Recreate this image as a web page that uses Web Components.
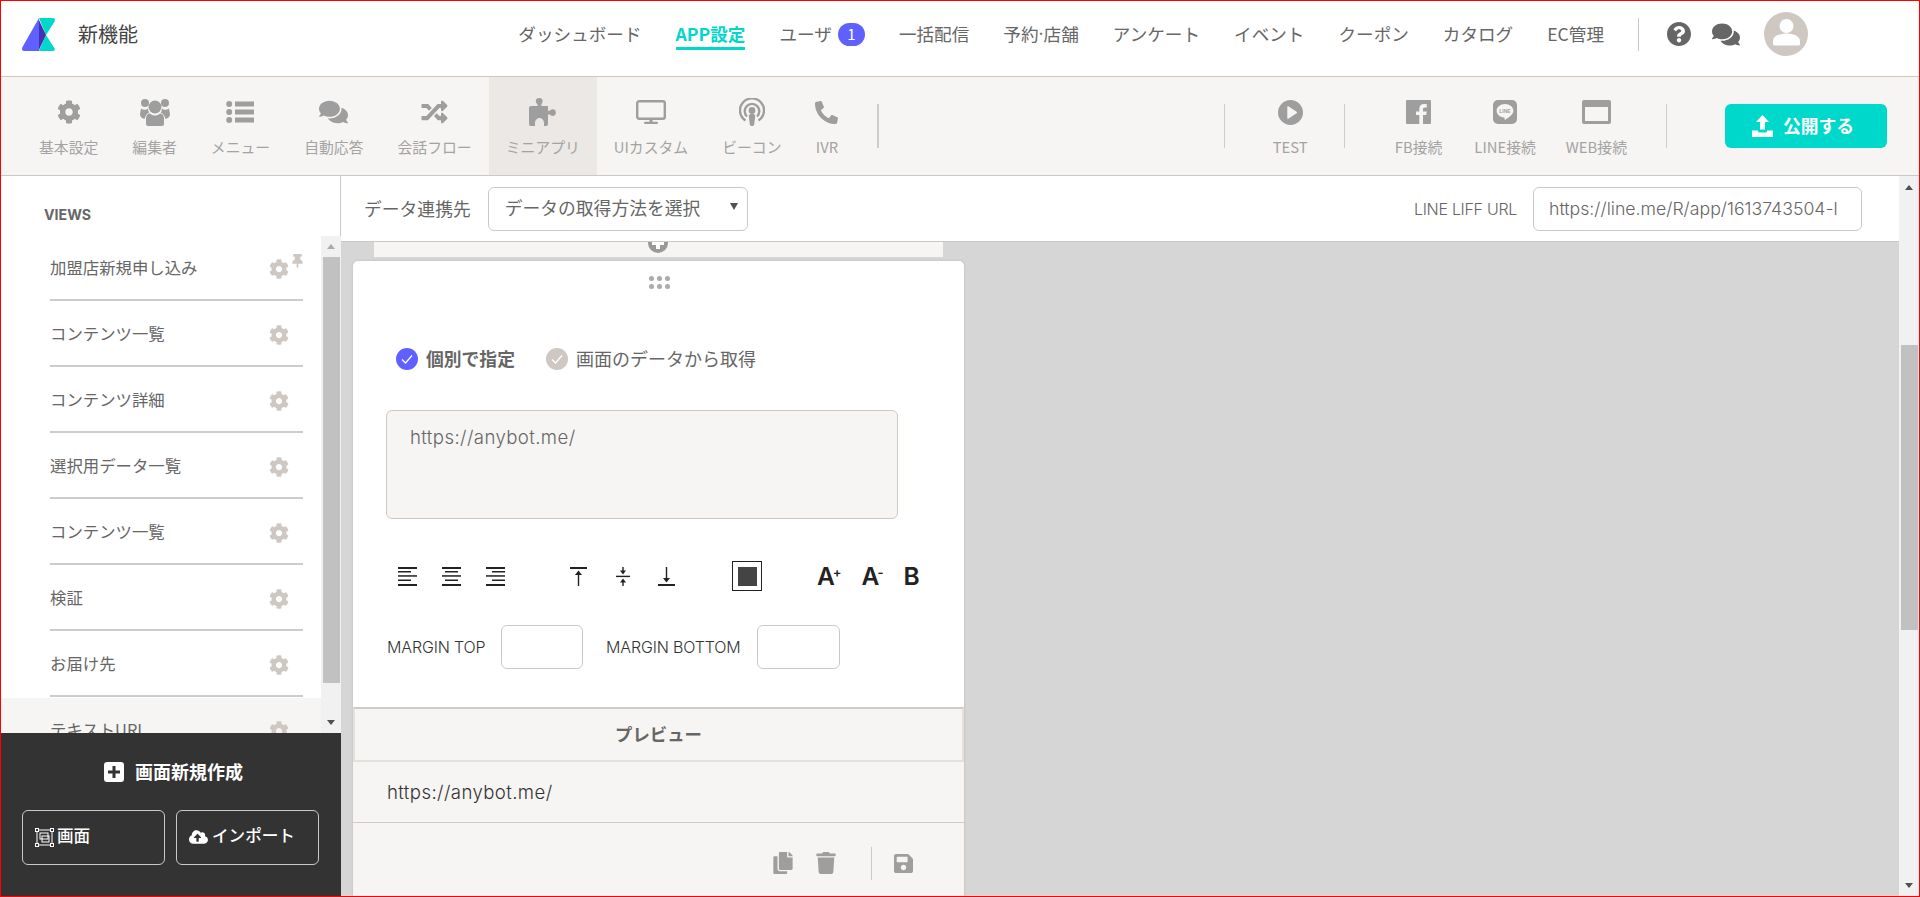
<!DOCTYPE html>
<html lang="ja">
<head>
<meta charset="utf-8">
<title>新機能</title>
<style>
  html, body { margin: 0; height: 897px; overflow: hidden; }
  body { font-family: "Noto Sans CJK JP", "Noto Sans", sans-serif; color: #666; background: #fff; }
</style>
</head>
<body>
<app-shell>
  <top-nav slot="top"></top-nav>
  <tool-bar slot="tools">
    <tool-item slot="left" label="基本設定"><ui-icon name="cog" w="24" h="24"></ui-icon></tool-item>
    <tool-item slot="left" label="編集者"><ui-icon name="users" w="30" h="28"></ui-icon></tool-item>
    <tool-item slot="left" label="メニュー"><ui-icon name="list" w="28" h="24"></ui-icon></tool-item>
    <tool-item slot="left" label="自動応答"><ui-icon name="comments" w="29" h="26"></ui-icon></tool-item>
    <tool-item slot="left" label="会話フロー"><ui-icon name="random" w="29" h="26"></ui-icon></tool-item>
    <tool-item slot="left" label="ミニアプリ" active><ui-icon name="puzzle" w="27" h="28"></ui-icon></tool-item>
    <tool-item slot="left" label="UIカスタム"><ui-icon name="monitor" w="30" h="24"></ui-icon></tool-item>
    <tool-item slot="left" label="ビーコン"><ui-icon name="podcast" w="26" h="28"></ui-icon></tool-item>
    <tool-item slot="left" label="IVR"><ui-icon name="phone" w="23" h="23"></ui-icon></tool-item>
    <tool-item slot="right" label="TEST"><ui-icon name="play" w="25" h="25"></ui-icon></tool-item>
    <tool-item slot="right2" label="FB接続"><ui-icon name="fb" w="25" h="24"></ui-icon></tool-item>
    <tool-item slot="right2" label="LINE接続" style="padding-left:15px"><ui-icon name="line" w="24" h="24"></ui-icon></tool-item>
    <tool-item slot="right2" label="WEB接続" style="padding-left:13px"><ui-icon name="web" w="29" h="24"></ui-icon></tool-item>
  </tool-bar>
  <view-sidebar slot="side">
    <view-row label="加盟店新規申し込み" pinned></view-row>
    <view-row label="コンテンツ一覧"></view-row>
    <view-row label="コンテンツ詳細"></view-row>
    <view-row label="選択用データ一覧"></view-row>
    <view-row label="コンテンツ一覧"></view-row>
    <view-row label="検証"></view-row>
    <view-row label="お届け先"></view-row>
    <view-row label="テキストURL" current></view-row>
  </view-sidebar>
  <data-header slot="head"></data-header>
  <block-canvas slot="canvas">
    <block-card></block-card>
  </block-canvas>
  <scroll-bar slot="scroll" btn="22" offset="147" size="285" up="#505050"></scroll-bar>
</app-shell>

<script>
const ICONS = {
  cog: '<svg viewBox="0 0 512 512"><path d="M487.4 315.7l-42.6-24.6c4.3-23.2 4.3-47 0-70.2l42.6-24.6c4.9-2.8 7.1-8.6 5.5-14-11.1-35.6-30-67.8-54.7-94.6-3.8-4.1-10-5.1-14.8-2.3L380.8 110c-17.9-15.4-38.5-27.3-60.8-35.1V25.8c0-5.6-3.9-10.5-9.4-11.7-36.7-8.2-74.3-7.8-109.2 0-5.5 1.2-9.4 6.1-9.4 11.7V75c-22.2 7.9-42.8 19.8-60.8 35.1L88.7 85.5c-4.9-2.8-11-1.9-14.8 2.3-24.7 26.7-43.6 58.9-54.7 94.6-1.7 5.4.6 11.2 5.5 14L67.3 221c-4.3 23.2-4.3 47 0 70.2l-42.6 24.6c-4.9 2.8-7.1 8.6-5.5 14 11.1 35.6 30 67.8 54.7 94.6 3.8 4.1 10 5.1 14.8 2.3l42.6-24.6c17.9 15.4 38.5 27.3 60.8 35.1v49.2c0 5.6 3.9 10.5 9.4 11.7 36.7 8.2 74.3 7.8 109.2 0 5.5-1.2 9.4-6.1 9.4-11.7v-49.2c22.2-7.9 42.8-19.8 60.8-35.1l42.6 24.6c4.9 2.8 11 1.9 14.8-2.3 24.7-26.7 43.6-58.9 54.7-94.6 1.5-5.5-.7-11.3-5.6-14.1zM256 336c-44.1 0-80-35.9-80-80s35.9-80 80-80 80 35.9 80 80-35.9 80-80 80z"/></svg>',
  users: '<svg viewBox="0 0 30 28"><circle cx="15" cy="9" r="6.5"/><circle cx="5" cy="5" r="4"/><circle cx="25" cy="5" r="4"/><path d="M6 26V20c0-3 2-4.500 4-4.500 1.500 1.500 3 2 5 2s3.500-.5 5-2c2 0 4 1.500 4 4.500v6q0 2-2 2H8q-2 0-2-2z"/><path d="M1 10.500q4 2.500 7 0 0 2.500 1.300 4Q5.500 16 4.600 21 0 20 0 16zM29 10.500q-4 2.500-7 0 0 2.500-1.300 4 3.800 1.500 4.700 6.500 4.600-1 4.600-5z"/></svg>',
  list: '<svg viewBox="0 0 28 24"><circle cx="3.200" cy="4" r="3"/><circle cx="3.200" cy="12" r="3"/><circle cx="3.200" cy="20" r="3"/><rect x="9" y="1.500" width="19" height="5"/><rect x="9" y="9.500" width="19" height="5"/><rect x="9" y="17.500" width="19" height="5"/></svg>',
  comments: '<svg viewBox="0 0 576 512"><path d="M416 192c0-88.400-93.100-160-208-160S0 103.600 0 192c0 34.300 14.100 65.900 38 92-13.400 30.200-35.500 54.200-35.800 54.500-2.200 2.300-2.800 5.700-1.500 8.700S4.800 352 8 352c36.600 0 66.900-12.300 88.700-25 32.200 15.700 70.300 25 111.300 25 114.900 0 208-71.600 208-160zm122 220c23.900-26 38-57.700 38-92 0-66.900-53.500-124.200-129.300-148.100.9 6.600 1.300 13.300 1.300 20.100 0 105.900-107.700 192-240 192-10.800 0-21.300-.8-31.700-1.900C207.800 439.600 281.800 480 368 480c41 0 79.100-9.200 111.300-25 21.800 12.700 52.100 25 88.700 25 3.200 0 6.100-1.900 7.300-4.800 1.300-2.900.7-6.300-1.500-8.700-.3-.3-22.400-24.200-35.800-54.500z"/></svg>',
  random: '<svg viewBox="0 0 512 512"><path d="M504.971 359.029c9.373 9.373 9.373 24.569 0 33.941l-80 79.984c-15.010 15.010-40.971 4.490-40.971-16.971V416h-58.785a12.004 12.004 0 0 1-8.773-3.812l-70.556-75.596 53.333-57.143L352 336h32v-39.981c0-21.438 25.943-31.998 40.971-16.971l80 79.981zM12 176h84l52.781 56.551 53.333-57.143-70.556-75.596A11.999 11.999 0 0 0 122.785 96H12c-6.627 0-12 5.373-12 12v56c0 6.627 5.373 12 12 12zm372 0v39.984c0 21.460 25.961 31.980 40.971 16.971l80-79.984c9.373-9.373 9.373-24.569 0-33.941l-80-79.981C409.943 24.021 384 34.582 384 56.019V96h-58.785a12.004 12.004 0 0 0-8.773 3.812L96 336H12c-6.627 0-12 5.373-12 12v56c0 6.627 5.373 12 12 12h110.785c3.326 0 6.503-1.381 8.773-3.812L352 176h32z"/></svg>',
  puzzle: '<svg viewBox="0 0 27 28"><path d="M2 8h6c1 0 1-1 .2-2C7 5 6.800 4 6.800 3.200a3.400 3.200 0 0 1 6.800 0c0 .8-.3 1.800-1 2.800-.8 1-.6 2 .4 2h6v4c0 1 1 1.200 2 .4 1-.8 1.800-1.200 2.600-1.200a3.200 3.400 0 0 1 0 6.800c-.8 0-1.600-.4-2.600-1.200-1-.8-2-.6-2 .4V26q0 2-2 2h-2v-3a4.500 5 0 0 0-9 0v3H2q-2 0-2-2V10q0-2 2-2z"/></svg>',
  monitor: '<svg viewBox="0 0 30 24"><rect x="1.200" y="1.200" width="27.600" height="17.600" rx="2" fill="none" stroke="currentColor" stroke-width="2.400"/><rect x="13.500" y="19" width="3" height="3"/><rect x="8" y="21.800" width="14" height="2.200" rx="1"/></svg>',
  podcast: '<svg viewBox="0 0 26 28"><path d="M6.500 23.500A12 12 0 1 1 19.500 23.500" fill="none" stroke="currentColor" stroke-width="2.400" transform="translate(0 -1)"/><path d="M8 19A7.300 7.300 0 1 1 18 19" fill="none" stroke="currentColor" stroke-width="2.400" transform="translate(0 -.5)"/><circle cx="13" cy="12.500" r="3.400"/><path d="M9.800 18q0-2 2-2h2.400q2 0 2 2l-1 8.500q-.3 1.500-2.200 1.500t-2.200-1.500z"/></svg>',
  phone: '<svg viewBox="0 0 512 512"><path transform="matrix(-1 0 0 1 512 0)" d="M493.400 24.600l-104-24c-11.300-2.600-22.900 3.300-27.500 13.900l-48 112c-4.200 9.800-1.400 21.300 6.900 28l60.600 49.600c-36 76.700-98.900 140.500-177.200 177.200l-49.600-60.600c-6.800-8.300-18.200-11.100-28-6.900l-112 48C3.900 366.500-2 378.100.6 389.400l24 104C27.100 504.200 36.700 512 48 512c256.100 0 464-207.500 464-464 0-11.200-7.700-20.900-18.600-23.400z"/></svg>',
  play: '<svg viewBox="0 0 25 25"><path fill-rule="evenodd" d="M12.500 0a12.500 12.500 0 1 0 0 25a12.500 12.500 0 1 0 0-25zM9.300 6.800q0-1 1-.5l8.300 5.400q1 .8 0 1.600l-8.300 5.400q-1 .5-1-.5z"/></svg>',
  fb: '<svg viewBox="0 0 25 24"><path d="M1 0h23a1 1 0 0 1 1 1v22a1 1 0 0 1-1 1h-7v-9h3.200l.5-3.600H17V9.200c0-1.100.3-1.800 1.800-1.800h2V4.200C20.400 4.100 19.300 4 18 4c-2.800 0-4.700 1.700-4.700 4.800v2.600H10V15h3.300v9H1a1 1 0 0 1-1-1V1a1 1 0 0 1 1-1z"/></svg>',
  line: '<svg viewBox="0 0 24 24"><rect width="24" height="24" rx="5"/><path fill="#f6f5f3" d="M12 4c4.700 0 8.400 3 8.400 6.800 0 3.300-3.800 6.300-8.200 9-.8.400-.7-.5-.6-1.200.1-.7 0-1.100-.6-1.100C6.800 17.200 3.600 14.400 3.600 10.800 3.600 7 7.300 4 12 4z"/><text x="12" y="12.700" font-size="5" font-family="Liberation Sans, sans-serif" font-weight="700" text-anchor="middle">LINE</text></svg>',
  web: '<svg viewBox="0 0 29 24"><path fill-rule="evenodd" d="M2 0h25q2 0 2 2v20q0 2-2 2H2q-2 0-2-2V2q0-2 2-2zM3 7v14h23V7z"/></svg>',
  upload: '<svg viewBox="0 0 21 22"><path d="M10.500 0l6.500 7h-4v7.500H8V7H4zM0 15.500h6v.5q0 1.500 1.500 1.500h6q1.500 0 1.500-1.500v-.5h6V22H0z"/></svg>',
  question: '<svg viewBox="8 8 496 496"><path d="M504 256c0 136.997-111.043 248-248 248S8 392.997 8 256C8 119.083 119.043 8 256 8s248 111.083 248 248zM262.655 90c-54.497 0-89.255 22.957-116.549 63.758-3.536 5.286-2.353 12.415 2.715 16.258l34.699 26.310c5.205 3.947 12.621 3.008 16.665-2.122 17.864-22.658 30.113-35.797 57.303-35.797 20.429 0 45.698 13.148 45.698 32.958 0 14.976-12.363 22.667-32.534 33.976C247.128 238.528 216 254.941 216 296v4c0 6.627 5.373 12 12 12h56c6.627 0 12-5.373 12-12v-1.333c0-28.462 83.186-29.647 83.186-106.667 0-58.002-60.165-102-116.531-102zM256 338c-25.365 0-46 20.635-46 46 0 25.364 20.635 46 46 46s46-20.636 46-46c0-25.365-20.635-46-46-46z"/></svg>',
  avatar: '<svg viewBox="0 0 44 44"><circle cx="22" cy="22" r="22" fill="#cfc8c2"/><circle cx="22.500" cy="14" r="7" fill="#fff"/><path fill="#fff" d="M9 32v-3c0-4.500 6-7.500 13.500-7.500S36 24.500 36 29v3q0 1.500-1.500 1.500h-24Q9 33.500 9 32z"/></svg>',
  pin: '<svg viewBox="0 0 384 512"><path d="M298.028 214.267L285.793 96H328c13.255 0 24-10.745 24-24V24c0-13.255-10.745-24-24-24H56C42.745 0 32 10.745 32 24v48c0 13.255 10.745 24 24 24h42.207L85.972 214.267C37.465 236.820 0 277.261 0 328c0 13.255 10.745 24 24 24h136v104.007c0 1.242.289 2.467.845 3.578l24 48c2.941 5.882 11.364 5.893 14.311 0l24-48a8.008 8.008 0 0 0 .845-3.578V352h136c13.255 0 24-10.745 24-24-.001-51.183-37.983-91.420-85.973-113.733z"/></svg>',
  plus: '<svg viewBox="0 0 20 20"><path fill-rule="evenodd" d="M3 0h14q3 0 3 3v14q0 3-3 3H3q-3 0-3-3V3q0-3 3-3zM8.500 4v4.500H4v3h4.500V16h3v-4.500H16v-3h-4.500V4z"/></svg>',
  frame: '<svg viewBox="0 0 19 19" style="fill:none" stroke="currentColor" stroke-width="1"><rect x="2" y="2" width="15" height="15"/><rect x="5" y="5" width="8" height="6"/><rect x="7" y="8" width="7" height="6"/><g fill="#333"><rect x=".5" y=".5" width="3" height="3"/><rect x="15.500" y=".5" width="3" height="3"/><rect x=".5" y="15.500" width="3" height="3"/><rect x="15.500" y="15.500" width="3" height="3"/></g></svg>',
  cloud: '<svg viewBox="0 0 640 512"><path d="M537.600 226.600c4.100-10.700 6.400-22.400 6.400-34.600 0-53-43-96-96-96-19.700 0-38.100 6-53.300 16.200C367 64.200 315.300 32 256 32c-88.400 0-160 71.600-160 160 0 2.700.1 5.400.2 8.100C40.200 219.800 0 273.200 0 336c0 79.500 64.500 144 144 144h368c70.700 0 128-57.300 128-128 0-61.900-44-113.600-102.400-125.400zM393.400 288H328v112c0 8.800-7.200 16-16 16h-48c-8.800 0-16-7.200-16-16V288h-65.400c-14.300 0-21.400-17.200-11.300-27.300l105.400-105.400c6.200-6.200 16.400-6.200 22.600 0l105.400 105.400c10.100 10.100 2.900 27.300-11.300 27.300z"/></svg>',
  copy: '<svg viewBox="0 0 448 512"><path d="M320 448v40c0 13.255-10.745 24-24 24H24c-13.255 0-24-10.745-24-24V120c0-13.255 10.745-24 24-24h72v296c0 30.879 25.121 56 56 56h168zm0-344V0H152c-13.255 0-24 10.745-24 24v368c0 13.255 10.745 24 24 24h272c13.255 0 24-10.745 24-24V128H344c-13.200 0-24-10.800-24-24zm120.971-31.029L375.029 7.029A24 24 0 0 0 358.059 0H352v96h96v-6.059a24 24 0 0 0-7.029-16.970z"/></svg>',
  trash: '<svg viewBox="0 0 448 512"><path d="M432 32H312l-9.400-18.700A24 24 0 0 0 281.100 0H166.800a23.720 23.720 0 0 0-21.400 13.300L136 32H16A16 16 0 0 0 0 48v32a16 16 0 0 0 16 16h416a16 16 0 0 0 16-16V48a16 16 0 0 0-16-16zM53.200 467a48 48 0 0 0 47.900 45h245.800a48 48 0 0 0 47.900-45L416 128H32z"/></svg>',
  save: '<svg viewBox="0 32 448 448"><path d="M433.941 129.941l-83.882-83.882A48 48 0 0 0 316.118 32H48C21.490 32 0 53.490 0 80v352c0 26.510 21.490 48 48 48h352c26.510 0 48-21.490 48-48V163.882a48 48 0 0 0-14.059-33.941zM224 416c-35.346 0-64-28.654-64-64 0-35.346 28.654-64 64-64s64 28.654 64 64c0 35.346-28.654 64-64 64zm96-304.520V212c0 6.627-5.373 12-12 12H76c-6.627 0-12-5.373-12-12V108c0-6.627 5.373-12 12-12h228.520c3.183 0 6.235 1.264 8.485 3.515l3.480 3.480A11.996 11.996 0 0 1 320 111.480z"/></svg>',
  alignLeft: '<svg viewBox="0 0 19 19"><rect y="0" width="19" height="2"/><rect y="4" width="13" height="1.500"/><rect y="8.200" width="19" height="1.500"/><rect y="12.500" width="13" height="1.500"/><rect y="17" width="19" height="2"/></svg>',
  alignCenter: '<svg viewBox="0 0 19 19"><rect y="0" width="19" height="2"/><rect x="3" y="4" width="13" height="1.500"/><rect y="8.200" width="19" height="1.500"/><rect x="3" y="12.500" width="13" height="1.500"/><rect y="17" width="19" height="2"/></svg>',
  alignRight: '<svg viewBox="0 0 19 19"><rect y="0" width="19" height="2"/><rect x="6" y="4" width="13" height="1.500"/><rect y="8.200" width="19" height="1.500"/><rect x="6" y="12.500" width="13" height="1.500"/><rect y="17" width="19" height="2"/></svg>',
  vTop: '<svg viewBox="0 0 17 19"><rect width="17" height="2"/><rect x="7.800" y="6" width="1.400" height="13"/><path d="M8.500 3.500L12 8H5z"/></svg>',
  vMiddle: '<svg viewBox="0 0 14 19"><rect y="8.700" width="14" height="1.400"/><rect x="6.300" y="0" width="1.400" height="4"/><path d="M7 7.500L4 3.500h6z"/><rect x="6.300" y="15" width="1.400" height="4"/><path d="M7 11.500l3 4H4z"/></svg>',
  vBottom: '<svg viewBox="0 0 17 19"><rect y="17" width="17" height="2"/><rect x="7.800" y="0" width="1.400" height="13"/><path d="M8.500 15.500L5 11h7z"/></svg>',
  check: '<svg viewBox="0 0 22 22"><circle cx="11" cy="11" r="11"/><path d="M6 11.500l3.500 3.500L16 7.500" fill="none" stroke="#fff" stroke-width="1.300"/></svg>'
}

class UiIcon extends HTMLElement {
  constructor () {
    super()
    this.attachShadow({ mode: 'open' })
    const w = this.getAttribute('w') || 20
    const h = this.getAttribute('h') || 20
    this.shadowRoot.innerHTML = `
    <style>
    :host { display: block; flex: none; width: ${w}px; height: ${h}px; line-height: 0; }
    svg { width: 100%; height: 100%; fill: currentColor; display: block; }
    </style>
    ${ICONS[this.getAttribute('name')]}
  `
  }
}
customElements.define('ui-icon', UiIcon)

// page frame: red outline, two bars on top, then sidebar / panel / scrollbar
class AppShell extends HTMLElement {
  constructor () {
    super()
    this.attachShadow({ mode: 'open' })
    this.shadowRoot.innerHTML = `
    <style>
    :host { display: flex; flex-direction: column; box-sizing: border-box; height: 897px; border: 1px solid #f00; overflow: hidden; }
    .body { flex: 1; min-height: 0; display: flex; }
    .panel { flex: 1; min-width: 0; display: flex; flex-direction: column; }
    </style>
    <slot name="top"></slot>
    <slot name="tools"></slot>
    <div class="body">
      <slot name="side"></slot>
      <div class="panel"><slot name="head"></slot><slot name="canvas"></slot></div>
      <slot name="scroll"></slot>
    </div>
  `
  }
}
customElements.define('app-shell', AppShell)

class TopNav extends HTMLElement {
  constructor () {
    super()
    this.attachShadow({ mode: 'open' })
    this.shadowRoot.innerHTML = `
    <style>
    :host { display: flex; align-items: center; box-sizing: border-box; height: 76px; padding: 0 111px 9px 21px; background: #fff; border-bottom: 1px solid #cfc8c2; }
    .logo { width: 33px; height: 33px; display: block; }
    .title { margin-left: 23px; font-size: 20px; line-height: 28px; color: #444; }
    nav { margin-left: auto; display: flex; align-items: center; gap: 34px; font-size: 17.6px; color: #666; }
    nav span.item { display: flex; align-items: center; line-height: 26px; padding-top: 3px; border-bottom: 3px solid transparent; white-space: nowrap; }
    nav span.on { color: #00d8cc; font-weight: 700; border-bottom-color: #00d8cc; }
    .badge { display: inline-flex; align-items: center; justify-content: center; width: 27px; height: 23px; margin-left: 6px; border-radius: 12px; background: #6060ff; color: #fff; font-size: 15px; }
    .dot { font-family: Inter, sans-serif; }
    .rule { width: 1px; height: 33px; margin-left: 34px; background: #cfc8c2; }
    .help { margin-left: 28px; color: #666; }
    .chat { margin-left: 21px; color: #666; }
    .me { margin-left: 24px; }
    </style>
    <svg class="logo" viewBox="0 0 33 33">
      <path fill="#6060ff" d="M17 0v33H2q-2 0-2-2 0-1 .5-2z"/>
      <path fill="#00d8cc" d="M17 0h14q2 0 2 2 0 .6-.4 1.400L24 17l8.600 13.600q.4.800.4 .4 0 2-2 2H17l7-16z"/>
      <path fill="#3d35b0" d="M17 2l7 15-7 15z"/>
    </svg>
    <div class="title">新機能</div>
    <nav>
      <span class="item">ダッシュボード</span>
      <span class="item on">APP設定</span>
      <span class="item">ユーザ<span class="badge">1</span></span>
      <span class="item">一括配信</span>
      <span class="item">予約<span class="dot">·</span>店舗</span>
      <span class="item">アンケート</span>
      <span class="item">イベント</span>
      <span class="item">クーポン</span>
      <span class="item">カタログ</span>
      <span class="item">EC管理</span>
    </nav>
    <div class="rule"></div>
    <ui-icon class="help" name="question" w="24" h="24"></ui-icon>
    <ui-icon class="chat" name="comments" w="28" h="25"></ui-icon>
    <ui-icon class="me" name="avatar" w="44" h="44"></ui-icon>
  `
  }
}
customElements.define('top-nav', TopNav)

class ToolBar extends HTMLElement {
  constructor () {
    super()
    this.attachShadow({ mode: 'open' })
    this.shadowRoot.innerHTML = `
    <style>
    :host { display: flex; box-sizing: border-box; height: 99px; padding: 0 32px 0 21px; background: #f6f5f3; border-bottom: 1px solid #cfc8c2; }
    .group { display: flex; }
    .v { align-self: flex-start; width: 1px; height: 44px; margin-top: 27px; background: #ccc; flex: none; }
    .v.thick { width: 2px; margin-left: 22px; }
    .right { margin-left: auto; display: flex; }
    .m32 { margin-right: 31px; }
    .m22 { margin-left: 22px; }
    .m33 { margin-left: 19px; margin-right: 33px; }
    .pub { align-self: flex-start; display: flex; align-items: center; box-sizing: border-box; width: 162px; height: 44px; margin: 27px 0 0 58px; padding: 0 0 3px 27px; gap: 10px; border-radius: 6px; background: #00d8cc; color: #fff; font-size: 17.8px; font-weight: 700; }
    .pub ui-icon { margin-top: 3px; }
    </style>
    <div class="group"><slot name="left"></slot></div>
    <div class="v thick"></div>
    <div class="right">
      <div class="v m32"></div>
      <slot name="right"></slot>
      <div class="v m33"></div>
      <slot name="right2"></slot>
      <div class="v m22"></div>
      <div class="pub"><ui-icon name="upload" w="21" h="22"></ui-icon>公開する</div>
    </div>
  `
  }
}
customElements.define('tool-bar', ToolBar)

class ToolItem extends HTMLElement {
  constructor () {
    super()
    this.attachShadow({ mode: 'open' })
    this.shadowRoot.innerHTML = `
    <style>
    :host { display: flex; flex-direction: column; align-items: center; padding: 20px 17px 0; color: #9e9e9e; }
    :host([active]) { background: #ebe8e5; }
    .ic { height: 30px; display: flex; align-items: center; justify-content: center; }
    .lb { margin-top: 10px; font-size: 14.83px; line-height: 20px; color: #a3a3a3; white-space: nowrap; }
    </style>
    <div class="ic"><slot></slot></div>
    <div class="lb">${this.getAttribute('label')}</div>
  `
  }
}
customElements.define('tool-item', ToolItem)

class ScrollBar extends HTMLElement {
  constructor () {
    super()
    this.attachShadow({ mode: 'open' })
    const btn = this.getAttribute('btn')
    this.shadowRoot.innerHTML = `
    <style>
    :host { display: flex; flex-direction: column; flex: none; width: 20px; background: #f1f1f1; }
    .b { height: ${btn}px; flex: none; display: flex; align-items: center; justify-content: center; }
    .b i { width: 0; height: 0; border: 4.5px solid transparent; border-top: 0; border-bottom: 5px solid ${this.getAttribute('up')}; }
    .b.d { margin-top: auto; }
    .b.d i { border-bottom: 0; border-top: 5px solid #505050; }
    .t { width: 17px; margin: ${this.getAttribute('offset')}px 0 0 2px; height: ${this.getAttribute('size')}px; background: #c1c1c1; }
    </style>
    <div class="b"><i></i></div>
    <div class="t"></div>
    <div class="b d"><i></i></div>
  `
  }
}
customElements.define('scroll-bar', ScrollBar)

class ViewRow extends HTMLElement {
  constructor () {
    super()
    this.attachShadow({ mode: 'open' })
    this.shadowRoot.innerHTML = `
    <style>
    :host { display: block; position: relative; flex: none; height: 66px; box-sizing: border-box; padding-left: 49px; }
    :host([current]) { background: #f6f5f3; }
    .in { display: flex; align-items: center; justify-content: space-between; box-sizing: border-box; width: 253px; height: 65px; padding-right: 14px; border-bottom: 2px solid #ccc; font-size: 16.4px; color: #666; }
    .in span { margin-bottom: 2px; }
    .gear { color: #cfc8c2; margin-top: 2px; }
    .pin { position: absolute; left: 291px; top: 18px; color: #cfc8c2; }
    </style>
    <div class="in"><span>${this.getAttribute('label')}</span><ui-icon class="gear" name="cog" w="20" h="20"></ui-icon></div>
    ${this.hasAttribute('pinned') ? '<ui-icon class="pin" name="pin" w="11" h="14"></ui-icon>' : ''}
  `
  }
}
customElements.define('view-row', ViewRow)

class ViewSidebar extends HTMLElement {
  constructor () {
    super()
    this.attachShadow({ mode: 'open' })
    this.shadowRoot.innerHTML = `
    <style>
    :host { display: flex; flex-direction: column; flex: none; width: 340px; background: #fff; }
    .hd { height: 60px; box-sizing: border-box; padding: 29px 0 0 43px; font-family: Inter, sans-serif; font-weight: 700; font-size: 14.2px; line-height: 20px; color: #666; border-right: 1px solid #cfc8c2; }
    .list { height: 497px; display: flex; overflow: hidden; }
    .rows { flex: 1; min-width: 0; display: flex; flex-direction: column; overflow: hidden; }
    .ft { flex: 1; background: #333; color: #fff; box-sizing: border-box; padding: 29px 0 0 21px; }
    .new { display: flex; align-items: center; gap: 11px; height: 20px; padding-left: 82px; font-size: 18px; font-weight: 700; }
    .new span { margin-top: -2px; }
    .btns { display: flex; gap: 11px; margin-top: 28px; }
    .btn { display: flex; align-items: center; gap: 3px; box-sizing: border-box; width: 143px; height: 55px; padding: 0 0 6px 12px; border: 1px solid #cfc8c2; border-radius: 6px; font-size: 16.6px; font-weight: 500; }
    .btn + .btn { gap: 4px; }
    .btn ui-icon { margin-top: 5px; }
    </style>
    <div class="hd">VIEWS</div>
    <div class="list">
      <div class="rows"><slot></slot></div>
      <scroll-bar btn="21" offset="0" size="426" up="#aaa"></scroll-bar>
    </div>
    <div class="ft">
      <div class="new"><ui-icon name="plus" w="20" h="20"></ui-icon><span>画面新規作成</span></div>
      <div class="btns">
        <div class="btn"><ui-icon name="frame" w="19" h="19"></ui-icon>画面</div>
        <div class="btn"><ui-icon name="cloud" w="19" h="16"></ui-icon>インポート</div>
      </div>
    </div>
  `
  }
}
customElements.define('view-sidebar', ViewSidebar)

class DataHeader extends HTMLElement {
  constructor () {
    super()
    this.attachShadow({ mode: 'open' })
    this.shadowRoot.innerHTML = `
    <style>
    :host { display: flex; align-items: center; flex: none; box-sizing: border-box; height: 66px; padding: 0 37px 0 23px; background: #fff; border-bottom: 1px solid #cfc8c2; font-size: 17.8px; color: #666; }
    .lb { margin-bottom: 2px; }
    .sel { display: flex; align-items: center; justify-content: space-between; box-sizing: border-box; width: 260px; height: 44px; margin-left: 17px; padding: 0 9px 4px 16px; border: 1px solid #cfc8c2; border-radius: 6px; }
    .sel i { width: 0; height: 0; border: 4px solid transparent; border-bottom: 0; border-top: 7px solid #505050; }
    .url-l { margin-left: auto; font-family: Inter, sans-serif; font-size: 16px; font-weight: 300; letter-spacing: -.3px; }
    .url { box-sizing: border-box; width: 329px; height: 44px; margin-left: 16px; padding: 0 8px 0 15px; border: 1px solid #cfc8c2; border-radius: 6px; font-family: Inter, sans-serif; font-size: 17.7px; font-weight: 300; line-height: 41px; white-space: nowrap; }
    </style>
    <span class="lb">データ連携先</span>
    <div class="sel">データの取得方法を選択<i></i></div>
    <span class="url-l">LINE LIFF URL</span>
    <div class="url">https://line.me/R/app/1613743504-l</div>
  `
  }
}
customElements.define('data-header', DataHeader)

class BlockCanvas extends HTMLElement {
  constructor () {
    super()
    this.attachShadow({ mode: 'open' })
    this.shadowRoot.innerHTML = `
    <style>
    :host { display: block; flex: 1; min-height: 0; overflow: hidden; background: #d6d6d6; }
    .strip { position: relative; box-sizing: border-box; width: 569px; height: 15px; margin-left: 33px; background: #f6f5f3; }
    .add { position: absolute; left: 274px; top: -9px; width: 20px; height: 20px; }
    </style>
    <div class="strip">
      <svg class="add" viewBox="0 0 20 20"><circle cx="10" cy="10" r="10" fill="#999"/><path d="M8 4h4v4h4v4h-4v4H8v-4H4V8h4z" fill="#fff"/></svg>
    </div>
    <slot></slot>
  `
  }
}
customElements.define('block-canvas', BlockCanvas)

class BlockCard extends HTMLElement {
  constructor () {
    super()
    this.attachShadow({ mode: 'open' })
    this.shadowRoot.innerHTML = `
    <style>
    :host { display: block; box-sizing: border-box; width: 611px; height: 640px; margin: 4px 0 0 12px; background: #fff; border-radius: 5px 5px 0 0; box-shadow: 0 0 2px 1px #cfc8c2; overflow: hidden; font-size: 17.8px; color: #666; }
    .dots { display: grid; grid-template-columns: repeat(3, 5px); gap: 3px; width: 21px; margin: 15px auto 0; padding-left: 1px; }
    .dots i { width: 5px; height: 5px; border-radius: 50%; background: #aaa; }
    .radios { display: flex; align-items: center; height: 22px; margin: 59px 0 0 43px; white-space: nowrap; }
    .radios ui-icon { color: #6060ff; margin-right: 8px; }
    .radios b { font-weight: 700; margin-right: 31px; margin-bottom: 2px; }
    .radios span { margin-bottom: 2px; font-size: 18px; }
    .radios ui-icon.off { color: #cfc8c2; }
    .area { box-sizing: border-box; width: 512px; height: 109px; margin: 40px 0 0 33px; padding: 12px 23px; border: 1px solid #cfc8c2; border-radius: 6px; background: #f6f5f3; font-family: Inter, sans-serif; font-size: 18.6px; font-weight: 300; letter-spacing: .4px; line-height: 28px; color: #666; }
    .fmt { display: flex; align-items: center; height: 30px; margin: 42px 0 0 45px; color: #222; }
    .fmt .l { margin-right: 25px; }
    .swatch { box-sizing: border-box; width: 30px; height: 30px; border: 1.5px solid #222; padding: 4.500px; margin-left: 57px; }
    .swatch i { display: block; width: 100%; height: 100%; background: #444; }
    .ab { font-family: Inter, sans-serif; font-size: 24.5px; font-weight: 600; line-height: 30px; color: #222; }
    .ab sup { font-size: 13px; font-weight: 600; line-height: 0; vertical-align: 8px; margin-left: -2px; }
    .margins { display: flex; align-items: center; height: 44px; margin: 34px 0 0 34px; font-family: Inter, sans-serif; font-size: 16px; font-weight: 300; letter-spacing: -.15px; color: #333; white-space: nowrap; }
    .margins i { display: block; box-sizing: border-box; height: 44px; border: 1px solid #cfc8c2; border-radius: 6px; flex: none; }
    .prev { display: flex; align-items: center; justify-content: center; box-sizing: border-box; height: 55px; margin-top: 38px; padding-bottom: 2px; background: #f6f5f3; border: 2px solid #e3e0dd; border-top-color: #cfcac6; font-size: 17.4px; font-weight: 700; color: #666; }
    .out { display: flex; align-items: center; box-sizing: border-box; height: 61px; padding: 0 0 1px 34px; background: #f6f5f3; border-bottom: 1px solid #d3cbc5; font-family: Inter, sans-serif; font-size: 18.6px; font-weight: 300; letter-spacing: .4px; color: #333; }
    .acts { display: flex; align-items: flex-start; height: 80px; padding: 29px 0 0 420px; background: #f6f5f3; color: #9e9e9e; }
    .acts .r { width: 1px; height: 33px; margin: -5px 22px 0 35px; background: #cfc8c2; }
    </style>
    <div class="dots"><i></i><i></i><i></i><i></i><i></i><i></i></div>
    <div class="radios">
      <ui-icon name="check" w="22" h="22"></ui-icon><b>個別で指定</b>
      <ui-icon class="off" name="check" w="22" h="22"></ui-icon><span>画面のデータから取得</span>
    </div>
    <div class="area">https://anybot.me/</div>
    <div class="fmt">
      <ui-icon class="l" name="alignLeft" w="19" h="19"></ui-icon>
      <ui-icon class="l" name="alignCenter" w="19" h="19"></ui-icon>
      <ui-icon name="alignRight" w="19" h="19"></ui-icon>
      <ui-icon style="margin-left:65px" name="vTop" w="17" h="19"></ui-icon>
      <ui-icon style="margin-left:29px" name="vMiddle" w="14" h="19"></ui-icon>
      <ui-icon style="margin-left:28px" name="vBottom" w="17" h="19"></ui-icon>
      <div class="swatch"><i></i></div>
      <span class="ab" style="margin-left:55px">A<sup>+</sup></span>
      <span class="ab" style="margin-left:20px">A<sup>-</sup></span>
      <span class="ab" style="margin-left:20px">B</span>
    </div>
    <div class="margins">
      <span style="width:97px">MARGIN TOP</span>
      <i style="width:82px;margin:0 23px 0 17px"></i>
      <span style="width:134px">MARGIN BOTTOM</span>
      <i style="width:83px;margin-left:17px"></i>
    </div>
    <div class="prev">プレビュー</div>
    <div class="out">https://anybot.me/</div>
    <div class="acts">
      <ui-icon name="copy" w="20" h="22"></ui-icon>
      <ui-icon style="margin-left:23px" name="trash" w="20" h="22"></ui-icon>
      <div class="r"></div>
      <ui-icon style="margin-top:2px" name="save" w="19" h="19"></ui-icon>
    </div>
  `
  }
}
customElements.define('block-card', BlockCard)
</script>
</body>
</html>
